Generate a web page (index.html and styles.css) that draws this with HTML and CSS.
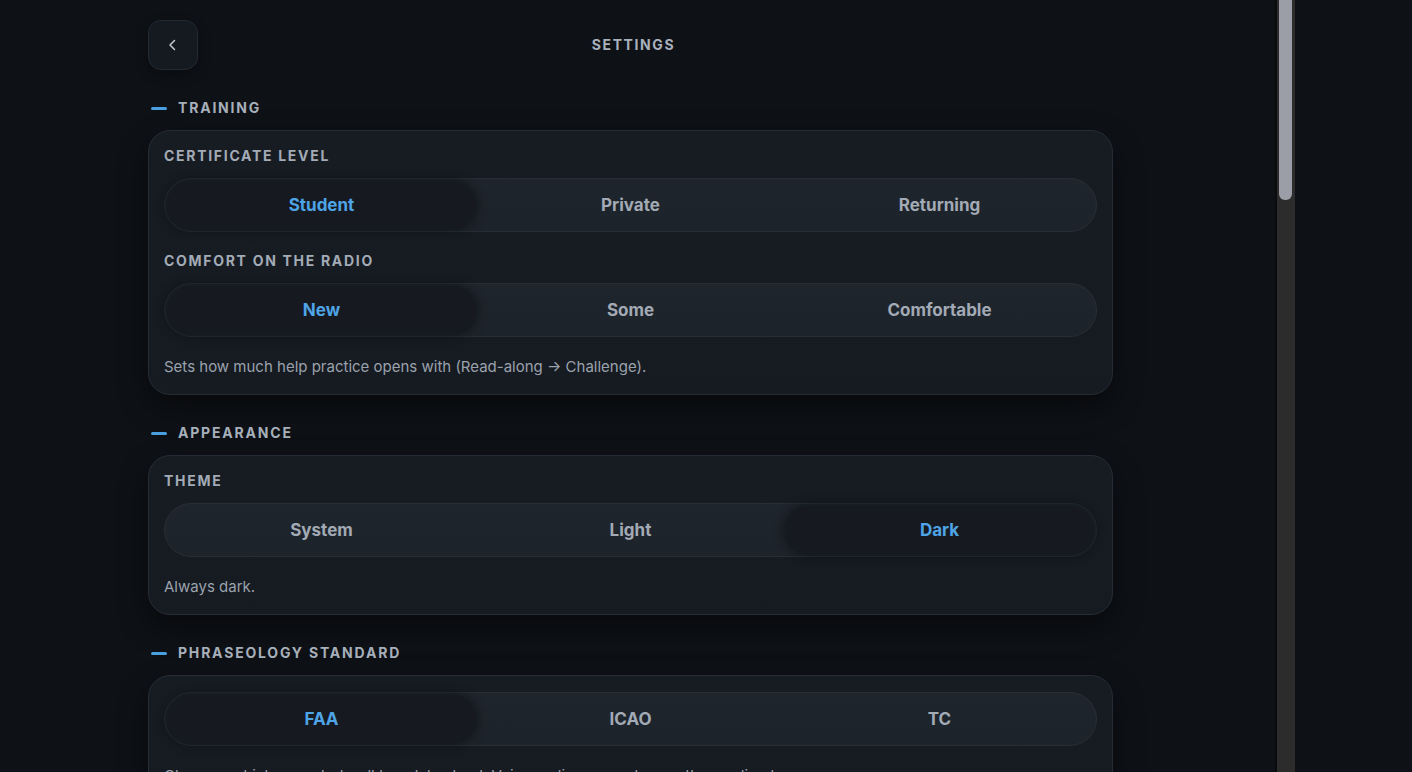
FILE: index.html
```html
<!DOCTYPE html>
<html lang="en">
<head>
    <meta charset="UTF-8">
    <meta name="viewport" content="width=device-width, initial-scale=1.0">
    <title>Settings</title>
    <link rel="stylesheet" href="styles.css">
</head>
<body>
    <div class="app">
        <main class="scroll-area">
            <div class="settings">
                <header class="top-bar">
                    <button class="back-btn" aria-label="Back">
                        <svg width="14" height="14" viewBox="0 0 14 14" fill="none">
                            <path d="M8.5 2.5 L4 7 L8.5 11.5" stroke="#c3c9d2" stroke-width="1.5" stroke-linecap="round" stroke-linejoin="round"/>
                        </svg>
                    </button>
                    <h1>Settings</h1>
                    <span></span>
                </header>

                <h2 class="section-title">Training</h2>
                <section class="card">
                    <div class="field">
                        <div class="field-label">Certificate level</div>
                        <div class="segmented">
                            <button class="seg active">Student</button>
                            <button class="seg">Private</button>
                            <button class="seg">Returning</button>
                        </div>
                    </div>
                    <div class="field">
                        <div class="field-label">Comfort on the radio</div>
                        <div class="segmented">
                            <button class="seg active">New</button>
                            <button class="seg">Some</button>
                            <button class="seg">Comfortable</button>
                        </div>
                    </div>
                    <p class="hint">Sets how much help practice opens with (Read-along &#8594; Challenge).</p>
                </section>

                <h2 class="section-title">Appearance</h2>
                <section class="card">
                    <div class="field">
                        <div class="field-label">Theme</div>
                        <div class="segmented">
                            <button class="seg">System</button>
                            <button class="seg">Light</button>
                            <button class="seg active">Dark</button>
                        </div>
                    </div>
                    <p class="hint">Always dark.</p>
                </section>

                <h2 class="section-title">Phraseology standard</h2>
                <section class="card">
                    <div class="field">
                        <div class="segmented">
                            <button class="seg active">FAA</button>
                            <button class="seg">ICAO</button>
                            <button class="seg">TC</button>
                        </div>
                    </div>
                    <p class="hint">Changes which expected-call templates load. Voice realism never lowers the grading bar.</p>
                </section>
            </div>
        </main>
        <div class="scrollbar">
            <div class="thumb"></div>
        </div>
    </div>
</body>
</html>
```

FILE: styles.css
```css
* {
    box-sizing: border-box;
}

body {
    margin: 0;
    height: 100vh;
    overflow: hidden;
    background-color: #0e1116;
    font-family: 'Inter', 'Noto Sans', sans-serif;
    color: #a3abb6;
}

.app {
    display: flex;
    height: 100vh;
}

.scroll-area {
    width: 1275px;
    height: 100vh;
    overflow: hidden;
    padding-right: 14px;
}

.settings {
    max-width: 965px;
    margin: 0 auto;
    padding-top: 20px;
}

.top-bar {
    display: grid;
    grid-template-columns: 50px 1fr 50px;
    align-items: center;
}

.back-btn {
    width: 50px;
    height: 50px;
    border-radius: 13px;
    background: #151a21;
    border: 1px solid #242a33;
    display: flex;
    align-items: center;
    justify-content: center;
    padding: 0;
    box-shadow: 0 4px 12px rgba(0, 0, 0, 0.35);
}

.top-bar h1 {
    margin: 0 0 1px;
    padding-left: 6px;
    text-align: center;
    font-size: 14px;
    font-weight: 700;
    letter-spacing: 1.6px;
    text-transform: uppercase;
    color: #a9b1bc;
}

.section-title {
    display: flex;
    align-items: center;
    gap: 11px;
    margin: 29px 0 13px;
    padding-left: 3px;
    font-size: 14px;
    line-height: 18px;
    font-weight: 700;
    letter-spacing: 1.8px;
    text-transform: uppercase;
    color: #a7afba;
}

.section-title::before {
    content: '';
    width: 16px;
    height: 3px;
    border-radius: 2px;
    background: #4a9fe0;
}

.card {
    background: linear-gradient(180deg, #171c23 0%, #161a21 100%);
    border: 1px solid #262c35;
    border-radius: 22px;
    padding: 16px 15px 17px;
    box-shadow: 0 12px 30px rgba(0, 0, 0, 0.45);
}

.field + .field {
    margin-top: 20px;
}

.field-label {
    font-size: 14px;
    line-height: 18px;
    font-weight: 700;
    letter-spacing: 1.7px;
    text-transform: uppercase;
    color: #a3abb6;
    margin-bottom: 13px;
}

.segmented {
    display: grid;
    grid-template-columns: repeat(3, 1fr);
    height: 54px;
    padding: 2px;
    border-radius: 27px;
    background: linear-gradient(180deg, #1f252d 0%, #1d232a 100%);
    border: 1px solid #282e37;
}

.seg {
    border: none;
    background: transparent;
    border-radius: 25px;
    font-family: inherit;
    font-size: 17px;
    font-weight: 700;
    color: #a2aab5;
    padding: 0;
}

.seg.active {
    background: #161a20;
    color: #4ea4e6;
    box-shadow: 0 0 10px 2px rgba(10, 12, 16, 0.55);
}

.hint {
    margin: 20px 0 0;
    font-size: 15px;
    line-height: 20px;
    color: #9aa2ad;
}

.scrollbar {
    width: 20px;
    height: 100vh;
    background: #2c2c2d;
    border-left: 2px solid #0a0b0d;
    padding: 0 3px 0 2px;
}

.thumb {
    height: 200px;
    background: #9b9ea6;
    border-radius: 0 0 6px 6px;
}
```
